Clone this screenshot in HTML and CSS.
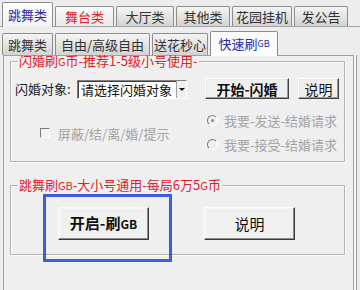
FILE: index.html
```html
<!DOCTYPE html>
<html lang="zh-CN">
<head>
<meta charset="utf-8">
<link rel="stylesheet" href="styles.css">
</head>
<body>
<div class="app">
  <div class="tabs top">
    <div class="tab sel blue w51">跳舞类</div>
    <div class="tab light red w59">舞台类</div>
    <div class="tab w58">大厅类</div>
    <div class="tab w54">其他类</div>
    <div class="tab w60">花园挂机</div>
    <div class="tab w54">发公告</div>
  </div>
  <div class="outer">
    <div class="tabs sub">
      <div class="tab w51">跳舞类</div>
      <div class="tab w95">自由/高级自由</div>
      <div class="tab w56">送花秒心</div>
      <div class="tab sel blue w68">快速刷<span class="gb">GB</span></div>
    </div>
    <div class="page">
      <fieldset class="grp g1">
        <legend>闪婚刷<span class="lat">G</span>币-推荐1-5级小号使用-</legend>
        <div class="row1">
          <span class="lbl">闪婚对象:</span>
          <div class="select"><span class="val">请选择闪婚对象</span><span class="arrow"></span></div>
          <button class="btn b-start">开始-闪婚</button>
          <button class="btn b-help">说明</button>
        </div>
        <div class="row2">
          <label class="chk"><span class="box"></span>屏蔽/结/离/婚/提示</label>
          <div class="radios">
            <label class="radio"><span class="dot on"></span>我要-发送-结婚请求</label>
            <label class="radio"><span class="dot"></span>我要-接受-结婚请求</label>
          </div>
        </div>
      </fieldset>
      <fieldset class="grp g2">
        <legend>跳舞刷<span class="lat">GB</span>-大小号通用-每局6万5<span class="lat">G</span>币</legend>
        <div class="row3">
          <div class="hl"><button class="btn big bold">开启-刷<span class="gb2">GB</span></button></div>
          <button class="btn big">说明</button>
        </div>
      </fieldset>
    </div>
  </div>
</div>
</body>
</html>
```

FILE: styles.css
```css
* { box-sizing: border-box; }
html, body { margin: 0; padding: 0; }
body {
  width: 360px;
  height: 290px;
  overflow: hidden;
  background: #ededed;
  font-family: "Noto Sans CJK SC", "Noto Sans", sans-serif;
  font-size: 13px;
  color: #222;
}
.app { width: 360px; height: 290px; }

.tabs { display: flex; align-items: flex-end; padding-left: 2px; }
.tabs.top { height: 26px; }
.tab {
  flex: none;
  display: flex;
  align-items: center;
  justify-content: center;
  margin-right: 2px;
  border: 1px solid #8e8e8e;
  border-bottom: none;
  border-radius: 2px 2px 0 0;
  background: linear-gradient(#f4f4f4, #d3d3d3);
  color: #333;
  line-height: 14px;
  white-space: nowrap;
}
.tabs.top .tab { height: 20px; }
.tabs.top .tab.sel { height: 25px; margin-bottom: -1px; position: relative; z-index: 1; }
.tab.sel { background: linear-gradient(#fdfdfd, #f1f1f1); }
.tab.light { background: linear-gradient(#fbfbfb, #e9e9e9); }
.blue { color: #2a2aa6; }
.red { color: #e0202a; }
.w51 { width: 51px; }
.w54 { width: 54px; }
.w56 { width: 56px; }
.w58 { width: 58px; }
.w59 { width: 59px; }
.w60 { width: 60px; }
.w68 { width: 68px; }
.w95 { width: 95px; }
.gb { font-size: 9px; letter-spacing: 0; }

.outer {
  border-top: 1px solid #a3a3a3;
  padding-top: 6px;
  height: 264px;
}
.tabs.sub { height: 22px; }
.tabs.sub .tab { height: 22px; }
.tabs.sub .tab.sel {
  height: 25px;
  margin-top: -3px;
  margin-bottom: -1px;
  position: relative;
  z-index: 1;
  background: #fbfbfb;
}
.page {
  margin-left: 3px;
  width: 351px;
  height: 240px;
  border: 1px solid #a0a0a0;
  border-bottom: none;
  background: #efefef;
  box-shadow: 2px 0 0 #f8f8f8, 3px 0 0 #9a9a9a;
  padding: 0 0 0 6px;
}

.grp {
  margin: 0;
  padding: 0;
  width: 335px;
  min-width: 0;
  border: 1px solid #b4b4b4;
  box-shadow: inset 1px 1px 0 #fdfdfd, 1px 1px 0 #fdfdfd;
}
.grp legend {
  margin-left: 7px;
  padding: 0 1px;
  line-height: 12px;
  height: 12px;
  color: #de2226;
  font-size: 13px;
}
.lat { font-size: 11px; }
.g1 { margin-top: -1px; padding: 11px 0 5px 0; }
.g2 { margin-top: 17px; padding: 16px 0 14px 0; }

.row1 { display: flex; align-items: center; height: 21px; padding-left: 4px; }
.lbl { width: 62px; color: #222; }
.select {
  display: flex;
  width: 110px;
  height: 19px;
  margin-top: 2px;
  background: #fff;
  border: 1px solid;
  border-color: #808080 #fff #fff #808080;
  box-shadow: inset 1px 1px 0 #404040;
}
.select .val { flex: 1; padding-left: 3px; line-height: 17px; color: #111; }
.select .arrow {
  width: 10px;
  height: 17px;
  background: #efefef;
  border-left: 1px solid #a0a0a0;
  position: relative;
}
.select .arrow::after {
  content: "";
  position: absolute;
  left: 2px;
  top: 7px;
  border-left: 3px solid transparent;
  border-right: 3px solid transparent;
  border-top: 3px solid #111;
}
.btn {
  font-family: inherit;
  font-size: 13px;
  color: #111;
  background: #f0f0f0;
  border: 1px solid;
  border-color: #fff #404040 #404040 #fff;
  box-shadow: inset -1px -1px 0 #9a9a9a, inset 1px 1px 0 #e6e6e6;
  padding: 0;
  margin: 0;
  line-height: 16px;
}
.b-start { width: 84px; height: 21px; margin-left: 18px; font-weight: bold; font-size: 14px; }
.b-help { width: 41px; height: 21px; margin-left: 9px; font-size: 14px; }

.row2 { display: flex; align-items: center; margin-top: 9px; height: 48px; }
.chk {
  display: flex;
  align-items: center;
  margin-left: 29px;
  margin-top: 2px;
  width: 167px;
  color: #a3a3a3;
}
.chk .box {
  width: 10px;
  height: 10px;
  margin-right: 8px;
  border: 1px solid;
  border-color: #7a7a7a #fff #fff #7a7a7a;
  background: #f2f2f2;
}
.radios { display: flex; flex-direction: column; }
.radio {
  display: flex;
  align-items: center;
  height: 24px;
  color: #a3a3a3;
}
.dot {
  width: 11px;
  height: 11px;
  margin-right: 6px;
  border-radius: 50%;
  border: 1px solid;
  border-color: #7a7a7a #fff #fff #7a7a7a;
  background: #efefef;
  position: relative;
}
.dot.on::after {
  content: "";
  position: absolute;
  left: 3px;
  top: 3px;
  width: 3px;
  height: 3px;
  border-radius: 50%;
  background: #8a8a8a;
}

.row3 { display: flex; align-items: flex-start; padding-left: 47px; }
.hl { position: relative; }
.hl::after {
  content: "";
  position: absolute;
  left: -15px;
  right: -23px;
  top: -13px;
  bottom: -22px;
  border: 3px solid #3d5fd6;
  pointer-events: none;
}
.btn.big {
  width: 91px;
  height: 33px;
  font-size: 15px;
  border-color: #fcfcfc #3a3a3a #3a3a3a #fcfcfc;
  box-shadow: inset -1px -1px 0 #8a8a8a, inset 1px 1px 0 #f6f6f6;
}
.hl + .btn.big { margin-left: 55px; }
.bold { font-weight: bold; font-size: 16px; }
.gb2 { font-size: 12px; }
```
